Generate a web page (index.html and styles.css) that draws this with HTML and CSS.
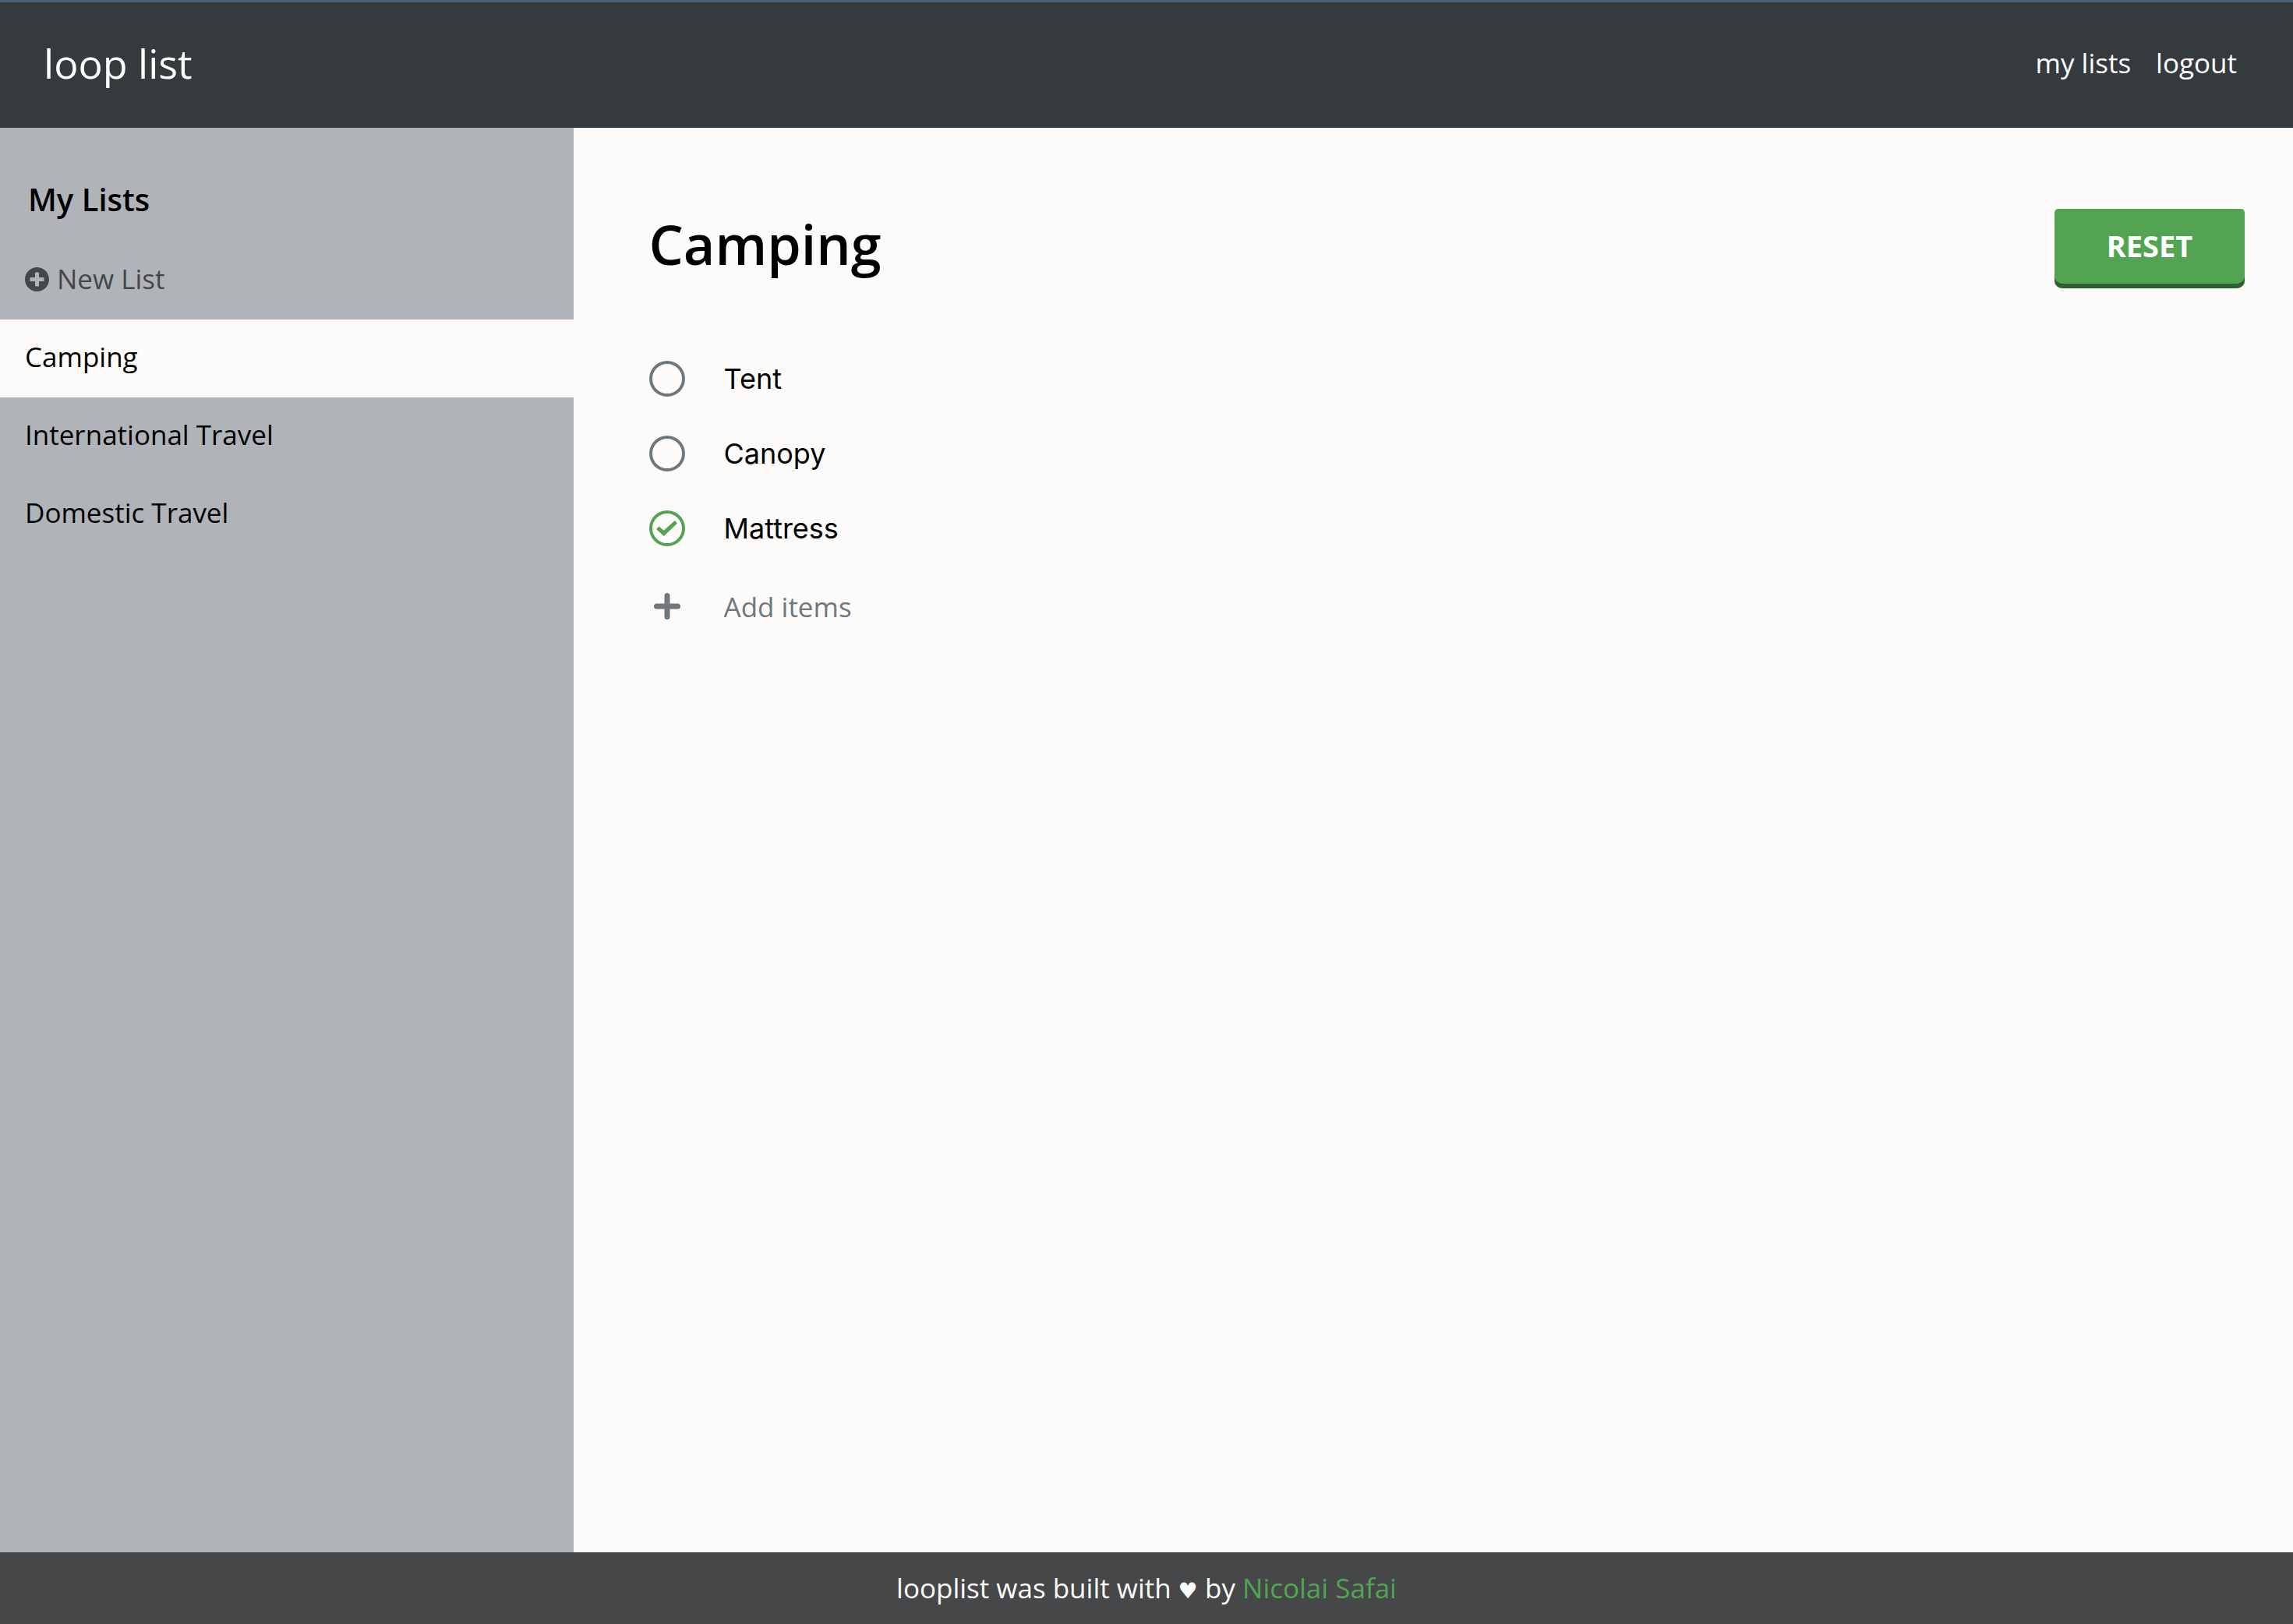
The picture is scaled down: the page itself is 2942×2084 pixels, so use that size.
FILE: index.html
```html
<!DOCTYPE html>
<html lang="en">
<head>
<meta charset="utf-8">
<meta name="viewport" content="width=device-width, initial-scale=1">
<title>loop list</title>
<link rel="stylesheet" href="styles.css">
</head>
<body>
<header class="topbar">
  <a class="brand" href="#">loop list</a>
  <nav class="topnav">
    <a href="#">my lists</a>
    <a href="#">logout</a>
  </nav>
</header>
<div class="layout">
  <aside class="sidebar">
    <h2 class="sidebar-title">My Lists</h2>
    <nav class="lists">
      <a class="list-link new-list" href="#">
        <svg class="new-icon" viewBox="8 8 496 496" aria-hidden="true"><path fill="currentColor" d="M256 8C119 8 8 119 8 256s111 248 248 248 248-111 248-248S393 8 256 8zm144 276c0 6.600-5.400 12-12 12h-92v92c0 6.600-5.400 12-12 12h-56c-6.600 0-12-5.400-12-12v-92h-92c-6.600 0-12-5.400-12-12v-56c0-6.600 5.400-12 12-12h92v-92c0-6.600 5.400-12 12-12h56c6.600 0 12 5.400 12 12v92h92c6.600 0 12 5.400 12 12v56z"/></svg>
        <span>New List</span>
      </a>
      <a class="list-link active" href="#">Camping</a>
      <a class="list-link" href="#">International Travel</a>
      <a class="list-link" href="#">Domestic Travel</a>
    </nav>
  </aside>
  <main class="content">
    <div class="content-head">
      <h1 class="title">Camping</h1>
      <button class="reset" type="button">RESET</button>
    </div>
    <ul class="items">
      <li class="item"><input class="check" type="checkbox" id="tent"><label for="tent">Tent</label></li>
      <li class="item"><input class="check" type="checkbox" id="canopy"><label for="canopy">Canopy</label></li>
      <li class="item"><input class="check" type="checkbox" id="mattress" checked><label for="mattress">Mattress</label></li>
    </ul>
    <form class="add">
      <button class="add-button" type="button" aria-label="Add">
        <svg class="add-icon" viewBox="0 0 34 34" aria-hidden="true"><path d="M17 3.500V30.500M3.500 17H30.500" fill="none" stroke="currentColor" stroke-width="7" stroke-linecap="round"/></svg>
      </button>
      <input class="add-input" type="text" placeholder="Add items" aria-label="Add items">
    </form>
  </main>
</div>
<footer class="footer">
  <p>looplist was built with <span class="heart">♥</span> by <a href="#">Nicolai Safai</a></p>
</footer>
</body>
</html>
```
FILE: styles.css
```css
* {
  box-sizing: border-box;
}

body {
  margin: 0;
  min-height: 100vh;
  display: flex;
  flex-direction: column;
  background: #fdfbf9;
  color: #000;
  font-family: "Open Sans", sans-serif;
  font-size: 35px;
  line-height: 48px;
}

a {
  color: inherit;
  text-decoration: none;
}

.topbar {
  display: flex;
  align-items: center;
  justify-content: space-between;
  padding: 42px 72px 47px 56px;
  border-top: 3px solid #4b6070;
  background: #353a3e;
  color: #fff;
  font-weight: 500;
}

.brand {
  font-size: 52px;
  line-height: 72px;
}

.topnav {
  display: flex;
  gap: 32px;
}

.layout {
  flex: 1;
  display: grid;
  grid-template-columns: 1fr 3fr;
}

.sidebar {
  background: #b0b3b8;
}

.sidebar-title {
  margin: 0;
  padding: 68px 36px 30px;
  font-size: 40px;
  line-height: 48px;
  font-weight: 600;
}

.list-link {
  display: flex;
  align-items: center;
  gap: 10px;
  padding: 24px 32px 28px;
}

.new-list {
  color: #464749;
  font-weight: 500;
}

.new-icon {
  width: 31px;
  height: 31px;
}

.active {
  background: #fdfbf9;
}

.content {
  padding: 104px 62px 96px 97px;
}

.content-head {
  display: flex;
  align-items: flex-start;
  justify-content: space-between;
}

.title {
  margin: 0;
  font-size: 70px;
  line-height: 90px;
  font-weight: 600;
}

.reset {
  width: 244px;
  height: 102px;
  padding: 0 0 8px;
  border: 0;
  border-radius: 5px 5px 10px 10px;
  background: #52a452;
  box-shadow: inset 0 -6px #2f5f30;
  color: #fff;
  font: 700 38px/48px "Open Sans", sans-serif;
}

.items {
  margin: 0;
  padding: 68px 0 0;
  list-style: none;
  font-family: Inter, sans-serif;
  font-size: 36px;
}

.item {
  display: flex;
  align-items: center;
  gap: 50px;
  height: 96px;
}

.check {
  appearance: none;
  display: grid;
  place-items: center;
  width: 46px;
  height: 46px;
  margin: 0;
  border: 4px solid #6f777f;
  border-radius: 50%;
}

.check:checked {
  border-color: #52a452;
}

.check:checked::before {
  content: "";
  width: 27px;
  height: 20px;
  background: #52a452;
  clip-path: polygon(0 55%, 13% 38%, 36% 64%, 88% 0, 100% 17%, 36% 100%);
}

.add {
  display: flex;
  align-items: center;
  gap: 50px;
  height: 104px;
}

.add-button {
  display: grid;
  place-items: center;
  width: 46px;
  height: 46px;
  padding: 0;
  border: 0;
  background: none;
  color: #6f777f;
}

.add-icon {
  width: 34px;
  height: 34px;
}

.add-input {
  flex: 1;
  padding: 2px 0 0;
  border: 0;
  background: none;
  color: inherit;
  font: inherit;
}

.add-input::placeholder {
  color: #6f777f;
  opacity: 1;
}

.footer {
  padding: 22px 32px;
  background: #464749;
  color: #fdfbf9;
  text-align: center;
  font-weight: 500;
}

.footer p {
  margin: 0;
}

.footer a {
  color: #52a452;
}

.heart {
  font-family: "DejaVu Sans", sans-serif;
  font-size: 28px;
  line-height: 1;
}
```
